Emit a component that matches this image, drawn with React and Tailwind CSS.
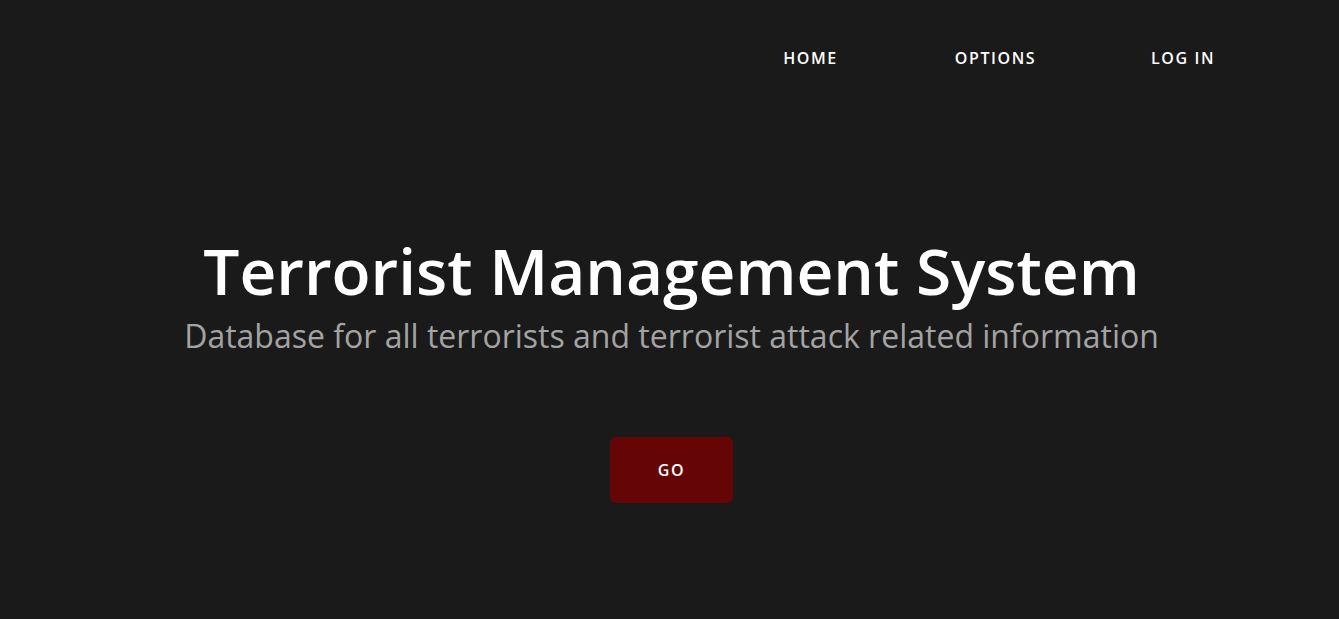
export default function App() {
  return (
    <div
      className="min-h-screen w-full bg-[#1a1a1a] text-white"
      style={{ fontFamily: '"Open Sans", sans-serif' }}
    >
      <nav className="flex justify-end pt-[46px] pr-[61px]">
        <ul className="flex items-center">
          <li className="w-[185px] text-center">
            <a className="text-[16px] font-semibold tracking-[0.1em] leading-[24px]">HOME</a>
          </li>
          <li className="w-[185px] text-center">
            <a className="text-[16px] font-semibold tracking-[0.1em] leading-[24px]">OPTIONS</a>
          </li>
          <li className="w-[190px] text-center">
            <a className="text-[16px] font-semibold tracking-[0.1em] leading-[24px]">LOG IN</a>
          </li>
        </ul>
      </nav>

      <main className="flex flex-col items-center pt-[166px] pl-[4px]">
        <h1 className="text-[64px] font-semibold leading-[70px]">Terrorist Management System</h1>
        <p className="mt-[8px] text-[32px] leading-[44px] text-[#a3a3a3]">
          Database for all terrorists and terrorist attack related information
        </p>
        <button className="mt-[79px] h-[66px] w-[123px] rounded-[6px] bg-[#660505] text-[16px] font-semibold tracking-[0.1em] text-white">
          GO
        </button>
      </main>
    </div>
  );
}
